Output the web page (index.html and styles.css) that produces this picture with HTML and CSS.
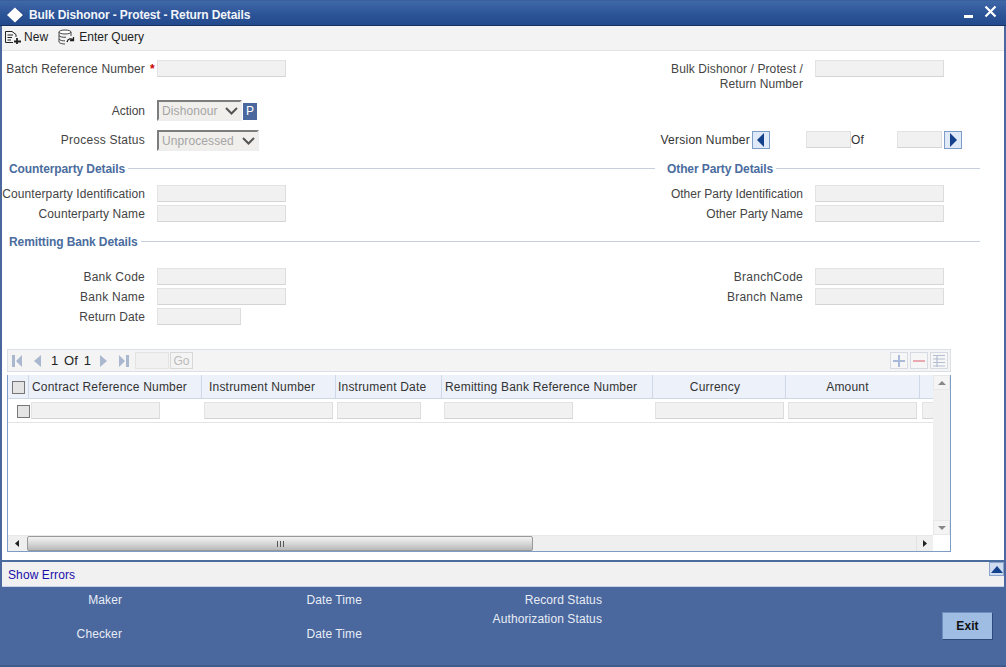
FILE: index.html
```html
<!DOCTYPE html>
<html lang="en">
<head>
<meta charset="utf-8">
<title>Bulk Dishonor - Protest - Return Details</title>
<link rel="stylesheet" href="styles.css">
</head>
<body>
<div class="window">
  <header class="titlebar">
    <svg class="logo" width="18" height="16" viewBox="0 0 18 16"><path d="M9 0.500 17 8 9 15.500 1 8Z" fill="#1d3f7c"/><path d="M8 0.500 16 8 8 15.500 0 8Z" fill="#fff"/></svg>
    <span class="title">Bulk Dishonor - Protest - Return Details</span>
    <span class="win-min"></span>
    <svg class="win-close" width="13" height="13" viewBox="0 0 13 13"><path d="M1.500 1.500 11.500 11.500M11.500 1.500 1.500 11.500" stroke="#fff" stroke-width="2.200" fill="none"/></svg>
  </header>
  <nav class="toolbar">
    <svg class="tool-icon" width="18" height="16" viewBox="0 0 18 16"><path d="M1.500 2.500H8L12 5.500V8M1.500 2.500V13.500H9M3.500 6H9M3.500 8.500H8M3.500 11H7" fill="none" stroke="#222" stroke-width="1"/><path d="M13 9V15M10 12.500H17" stroke="#222" stroke-width="1.800"/></svg>
    <span class="tool-label">New</span>
    <svg class="tool-icon query" width="18" height="16" viewBox="0 0 18 16"><ellipse cx="8" cy="3" rx="6" ry="2" fill="#fff" stroke="#444"/><path d="M2 3V13C2 14 5 15 8 15M14 3V7M2 6.500C3 8 6 8.500 9 8.200M2 10C3 11.500 6 12 8 11.800" fill="none" stroke="#444"/><path d="M10 13C11 9.500 14 9 16.500 11M16.500 8V11.500H13" fill="none" stroke="#222" stroke-width="1.300"/></svg>
    <span class="tool-label tool-query">Enter Query</span>
  </nav>

  <main class="form">
    <div class="row row-batch">
      <div class="col-left"><label class="lbl lbl-batch">Batch Reference Number<span class="req">*</span></label><span class="input"></span></div>
      <div class="col-right"><label class="lbl lbl-right">Bulk Dishonor / Protest / Return Number</label><span class="input"></span></div>
    </div>
    <div class="row row-action">
      <div class="col-left"><label class="lbl lbl-action">Action</label><span class="select sel-action">Dishonour<svg class="chev" width="13" height="8" viewBox="0 0 13 8"><path d="M1 1 6.500 6.500 12 1" fill="none" stroke="#555" stroke-width="2"/></svg></span><span class="pbtn">P</span></div>
    </div>
    <div class="row row-status">
      <div class="col-left"><label class="lbl lbl-status wide">Process Status</label><span class="select sel-status">Unprocessed<svg class="chev" width="13" height="8" viewBox="0 0 13 8"><path d="M1 1 6.500 6.500 12 1" fill="none" stroke="#555" stroke-width="2"/></svg></span></div>
      <div class="version">
        <span class="ver-label wide">Version Number</span>
        <span class="navbtn"><svg width="8" height="14" viewBox="0 0 8 14"><path d="M7 0V14L0 7Z" fill="#13418c"/></svg></span>
        <span class="input ver-in first"></span>
        <span class="of">Of</span>
        <span class="input ver-in second"></span>
        <span class="navbtn"><svg width="8" height="14" viewBox="0 0 8 14"><path d="M1 0V14L8 7Z" fill="#13418c"/></svg></span>
      </div>
    </div>

    <div class="sections row-sec-a">
      <div class="sec sec-left"><span class="sec-title">Counterparty Details</span><span class="sec-line"></span></div>
      <div class="sec sec-right"><span class="sec-title">Other Party Details</span><span class="sec-line"></span></div>
    </div>
    <div class="row row-next">
      <div class="col-left"><label class="lbl">Counterparty Identification</label><span class="input"></span></div>
      <div class="col-right"><label class="lbl lbl-right tight">Other Party Identification</label><span class="input"></span></div>
    </div>
    <div class="row row-next">
      <div class="col-left"><label class="lbl">Counterparty Name</label><span class="input"></span></div>
      <div class="col-right"><label class="lbl lbl-right tight">Other Party Name</label><span class="input"></span></div>
    </div>

    <div class="sections row-sec-b">
      <div class="sec sec-full"><span class="sec-title">Remitting Bank Details</span><span class="sec-line"></span></div>
    </div>
    <div class="row row-next">
      <div class="col-left"><label class="lbl wide">Bank Code</label><span class="input"></span></div>
      <div class="col-right"><label class="lbl lbl-right wide">BranchCode</label><span class="input"></span></div>
    </div>
    <div class="row row-next">
      <div class="col-left"><label class="lbl wide">Bank Name</label><span class="input"></span></div>
      <div class="col-right"><label class="lbl lbl-right wide">Branch Name</label><span class="input"></span></div>
    </div>
    <div class="row row-next">
      <div class="col-left"><label class="lbl">Return Date</label><span class="input date"></span></div>
    </div>

    <section class="grid-wrap">
      <div class="pager">
        <svg class="pg first-pg" width="10" height="12" viewBox="0 0 10 12"><path d="M0 0H3V12H0ZM10 0V12L4 6Z" fill="#a9b8cf"/></svg>
        <svg class="pg prev-pg" width="7" height="12" viewBox="0 0 7 12"><path d="M7 0V12L0 6Z" fill="#a9b8cf"/></svg>
        <span class="pg-text">1 Of 1</span>
        <svg class="pg next-pg" width="7" height="12" viewBox="0 0 7 12"><path d="M0 0V12L7 6Z" fill="#a9b8cf"/></svg>
        <svg class="pg last-pg" width="10" height="12" viewBox="0 0 10 12"><path d="M0 0V12L6 6ZM7 0H10V12H7Z" fill="#a9b8cf"/></svg>
        <span class="pg-input"></span>
        <span class="pg-go">Go</span>
        <span class="pg-actions">
          <span class="pg-act"><svg width="14" height="14" viewBox="0 0 14 14"><path d="M7 1V13M1 7H13" stroke="#a9bad8" stroke-width="2"/></svg></span>
          <span class="pg-act"><svg width="14" height="14" viewBox="0 0 14 14"><path d="M1 7H13" stroke="#e8aab0" stroke-width="2"/></svg></span>
          <span class="pg-act"><svg width="14" height="14" viewBox="0 0 14 14"><path d="M1 1.500H13M1 5H13M1 8.500H13M1 12H13M5 1V13" stroke="#b4bed2" stroke-width="1.200"/></svg></span>
        </span>
      </div>
      <div class="table-box">
        <div class="table-view">
          <div class="t-main">
            <div class="t-row t-head">
              <div class="cell c0"><span class="check"></span></div>
              <div class="cell c1">Contract Reference Number</div>
              <div class="cell c2">Instrument Number</div>
              <div class="cell c3">Instrument Date</div>
              <div class="cell c4">Remitting Bank Reference Number</div>
              <div class="cell c5 center">Currency</div>
              <div class="cell c6 center">Amount</div>
              <div class="cell c7"></div>
            </div>
            <div class="t-row t-body">
              <div class="bcell c0"><span class="check small"></span></div>
              <div class="bcell c1"><span class="input wide-1"></span></div>
              <div class="bcell c2"><span class="input"></span></div>
              <div class="bcell c3"><span class="input narrow"></span></div>
              <div class="bcell c4"><span class="input"></span></div>
              <div class="bcell c5"><span class="input"></span></div>
              <div class="bcell c6"><span class="input"></span></div>
              <div class="bcell c7"><span class="input stub"></span></div>
            </div>
          </div>
          <div class="vscroll">
            <span class="v-btn"><svg width="8" height="4" viewBox="0 0 8 4"><path d="M4 0 8 4H0Z" fill="#888"/></svg></span>
            <span class="v-btn"><svg width="8" height="4" viewBox="0 0 8 4"><path d="M0 0H8L4 4Z" fill="#888"/></svg></span>
          </div>
        </div>
        <div class="hscroll">
          <svg class="h-arrow" width="4" height="7" viewBox="0 0 4 7"><path d="M4 0V7L0 3.500Z" fill="#222"/></svg>
          <div class="h-thumb"><span class="grip"></span></div>
          <span class="h-end"><svg width="4" height="7" viewBox="0 0 4 7"><path d="M0 0V7L4 3.500Z" fill="#222"/></svg></span>
        </div>
      </div>
    </section>
  </main>

  <div class="errors">
    <a class="err-link">Show Errors</a>
    <span class="err-btn"><svg width="12" height="7" viewBox="0 0 12 7"><path d="M6 0 12 7H0Z" fill="#13418c"/></svg></span>
  </div>
  <footer class="footer">
    <div class="audit">
      <div class="a-row a-row-1"><span class="a-lbl maker">Maker</span><span class="a-lbl dt">Date Time</span><span class="a-lbl rs">Record Status</span></div>
      <div class="a-row a-auth"><span class="a-lbl maker"></span><span class="a-lbl dt"></span><span class="a-lbl rs">Authorization Status</span></div>
      <div class="a-row a-row-2"><span class="a-lbl maker">Checker</span><span class="a-lbl dt">Date Time</span></div>
    </div>
    <span class="exit">Exit</span>
  </footer>
</div>
</body>
</html>
```

FILE: styles.css
```css
* { box-sizing: border-box; }
html, body { margin: 0; padding: 0; }
body { width: 1006px; height: 667px; overflow: hidden; background: #fff; font-family: "Liberation Sans", Arial, sans-serif; font-size: 12px; letter-spacing: 0.1px; color: #333; }
.window { width: 1006px; height: 667px; border: 2px solid #4a679e; border-top: 0; border-bottom: 0; display: flex; flex-direction: column; background: #fff; }

.titlebar { height: 26px; flex: none; margin: 0 -2px; display: flex; align-items: center; padding: 3px 9px 0 7px; background: linear-gradient(#3f68a8, #2a5296 60%, #234a8c); border-top: 1px solid #3a5f9c; border-bottom: 1px solid #16305f; color: #fff; }
.logo { flex: none; }
.title { margin-left: 4px; font-weight: bold; letter-spacing: -0.12px; color: #f2f5fa; }
.win-min { margin-left: auto; width: 9px; height: 3px; margin-top: 3px; background: #fff; }
.win-close { margin-left: 11px; margin-top: -6px; }

.toolbar { height: 25px; flex: none; display: flex; align-items: center; background: #f3f3f3; border-bottom: 1px solid #e4e4e4; padding: 0 0 3px 2px; color: #222; }
.tool-label { margin-left: 2px; }
.tool-query { margin-left: 4px; letter-spacing: 0; }
.query { margin-left: 9px; }

.form { flex: none; height: 509px; display: flex; flex-direction: column; }
.row { display: flex; align-items: flex-start; }
.row-batch { height: 40px; margin-top: 9px; }
.row-action { height: 30px; }
.row-status { height: 30px; }
.row-next { height: 20px; }

.col-left { width: 650px; display: flex; align-items: flex-start; flex: none; }
.col-right { display: flex; align-items: flex-start; flex: none; }
.lbl { width: 143px; text-align: right; color: #444; line-height: 15px; padding-top: 2px; flex: none; white-space: nowrap; position: relative; }
.col-left > .lbl:first-child { margin-right: 12px; }
.lbl-right { width: 151px; white-space: normal; margin-right: 12px; }
.lbl-batch { letter-spacing: 0.15px; }
.lbl-action { padding-top: 4px; letter-spacing: 0; }
.lbl-status { padding-top: 3px; }
.wide { letter-spacing: 0.25px; }
.tight { letter-spacing: 0; }
.req { position: absolute; left: 148px; top: 2px; color: #c00; font-weight: bold; }
.input { display: block; flex: none; width: 129px; height: 17px; background: #f1f1f1; border: 1px solid #e3e3e3; border-bottom-color: #d4d4d4; border-right-color: #dcdcdc; }
.input.date { width: 84px; }

.select { display: flex; align-items: center; justify-content: space-between; flex: none; height: 21px; background: #f0efec; border: 2px solid #7d7d7d; border-right-color: #eee; border-bottom-color: #eee; color: #a5a5a5; padding: 0 2px 0 3px; }
.sel-action { width: 85px; }
.sel-status { width: 102px; }
.chev { flex: none; }
.pbtn { width: 14px; height: 17px; margin-left: 1px; margin-top: 3px; background: #4a679e; color: #fff; font-size: 12px; text-align: center; line-height: 17px; }

.version { display: flex; align-items: flex-start; padding-top: 1px; }
.ver-label { width: 90px; text-align: right; padding-top: 2px; color: #333; line-height: 15px; margin-left: 8px; margin-right: 2px; white-space: nowrap; }
.navbtn { width: 18px; height: 18px; display: flex; align-items: center; justify-content: center; background: #dfe9f7; border: 1px solid #7d9cc8; flex: none; }
.ver-in { width: 45px; }
.ver-in.first { margin-left: 36px; }
.ver-in.second { margin-left: 33px; margin-right: 2px; }
.of { width: 13px; padding-top: 2px; line-height: 15px; }

.sections { display: flex; align-items: center; height: 18px; }
.row-sec-a { margin-bottom: 7px; }
.row-sec-b { margin-top: 8px; margin-bottom: 17px; }
.sec { display: flex; align-items: center; flex: none; }
.sec-left { width: 653px; padding-left: 7px; }
.sec-right { width: 325px; padding-left: 12px; }
.sec-full { width: 978px; padding-left: 7px; }
.sec-title { font-weight: bold; letter-spacing: -0.1px; color: #4a6c9e; white-space: nowrap; }
.sec-line { flex: 1; height: 1px; margin-top: -1px; margin-left: 3px; background: #c6d0dc; }

.grid-wrap { margin: 21px 0 0 5px; width: 944px; }
.pager { height: 23px; display: flex; align-items: center; background: #f4f4f4; border: 1px solid #dbe0e6; padding-left: 4px; }
.pg { flex: none; }
.prev-pg { margin-left: 12px; }
.pg-text { margin-left: 10px; width: 39px; color: #222; font-size: 13px; word-spacing: 2px; white-space: nowrap; }
.next-pg { margin-left: 10px; }
.last-pg { margin-left: 12px; }
.pg-input { width: 34px; height: 17px; margin-left: 6px; background: #f1f1f1; border: 1px solid #e3e3e3; }
.pg-go { width: 23px; height: 17px; margin-left: 1px; border: 1px solid #d8d8d8; color: #bbb; text-align: center; line-height: 16px; background: #f4f4f4; }
.pg-actions { margin-left: auto; display: flex; gap: 2px; padding-right: 2px; }
.pg-act { width: 18px; height: 17px; border: 1px solid #d6dae2; display: flex; align-items: center; justify-content: center; background: #f6f6f6; }

.table-box { margin-top: 3px; height: 177px; border: 1px solid #7d9cc8; border-top: 0; display: flex; flex-direction: column; background: #fff; width: 944px; }
.table-view { flex: none; height: 160px; display: flex; }
.t-main { width: 925px; flex: none; overflow: hidden; }
.t-row { display: flex; width: 925px; }
.t-head { height: 24px; padding-top: 0; background: #edf1fa; border-bottom: 1px solid #cfd8e6; }
.t-body { height: 24px; border-bottom: 1px solid #e4e4e4; padding-top: 3px; }
.cell { flex: none; display: flex; align-items: center; color: #333; letter-spacing: 0.2px; border-right: 1px solid #cfd8e6; padding-left: 3px; padding-top: 1px; white-space: nowrap; overflow: hidden; }
.center { justify-content: center; padding-left: 0; }
.cell.c5 { padding-right: 8px; }
.cell.c6 { padding-right: 10px; }
.cell.c3 { padding-left: 2px; }
.bcell { flex: none; padding-left: 2px; overflow: hidden; }
.c0 { width: 21px; padding-left: 4px; }
.c1 { width: 173px; }
.c2 { width: 134px; padding-left: 7px; }
.c3 { width: 106px; }
.c4 { width: 211px; }
.c5 { width: 133px; }
.c6 { width: 134px; }
.c7 { width: 14px; border-right: 0; }
.bcell.c0 { padding-left: 9px; overflow: visible; }
.bcell.c1 { padding-left: 0; }
.bcell.c2 { padding-left: 2px; }
.bcell.c3 { padding-left: 1px; }
.input.wide-1 { margin-left: 2px; }
.input.narrow { width: 84px; }
.input.stub { width: 30px; }
.check { display: block; width: 13px; height: 13px; background: #e4e4e4; border: 1px solid #777; }
.check.small { margin-top: 3px; }
.vscroll { width: 17px; flex: none; background: #f0f0f0; display: flex; flex-direction: column; justify-content: space-between; }
.v-btn { height: 15px; display: flex; align-items: center; justify-content: center; background: #f4f4f4; border: 1px solid #e8e8e8; }
.hscroll { height: 16px; flex: none; display: flex; align-items: center; background: #efefef; border-top: 1px solid #e8e8e8; padding-left: 7px; width: 925px; }
.h-arrow { flex: none; }
.h-thumb { width: 506px; height: 15px; margin-left: 8px; background: linear-gradient(#f2f2f2, #d8d8d8 50%, #b8b8b8); border: 1px solid #999; border-radius: 2px; display: flex; align-items: center; justify-content: center; }
.grip { width: 7px; height: 6px; background: repeating-linear-gradient(90deg, #555 0 1px, transparent 1px 3px); }
.h-end { margin-left: auto; width: 17px; height: 15px; display: flex; align-items: center; justify-content: center; border-left: 1px solid #e2e2e2; }

.errors { height: 27px; flex: none; display: flex; align-items: flex-start; background: #f1f1f1; border-top: 2px solid #4a6c9e; border-bottom: 1px solid #c6d3e8; padding-left: 6px; }
.err-link { color: #1a0dab; margin-top: 6px; }
.err-btn { margin-left: auto; width: 15px; height: 14px; background: #cfdcf0; border: 1px solid #8aa4cc; display: flex; align-items: center; justify-content: center; }

.footer { flex: 1; display: flex; background: #4a679e; border-bottom: 2px solid #3f5a8c; margin: 0 -2px; padding: 0 2px; color: #e8edf5; }
.audit { flex: 1; padding-top: 6px; }
.a-row { display: flex; line-height: 15px; }
.a-auth { margin-top: 4px; }
.a-lbl { flex: none; text-align: right; }
.maker { width: 120px; }
.dt { width: 240px; }
.rs { width: 240px; }
.exit { align-self: flex-start; flex: none; margin: 25px 11px 0 0; width: 51px; height: 28px; background: #9fbde3; border: 1px solid #6f8fc0; border-right-color: #2e4a7c; border-bottom-color: #2e4a7c; color: #111; font-weight: bold; text-align: center; line-height: 26px; }
```
